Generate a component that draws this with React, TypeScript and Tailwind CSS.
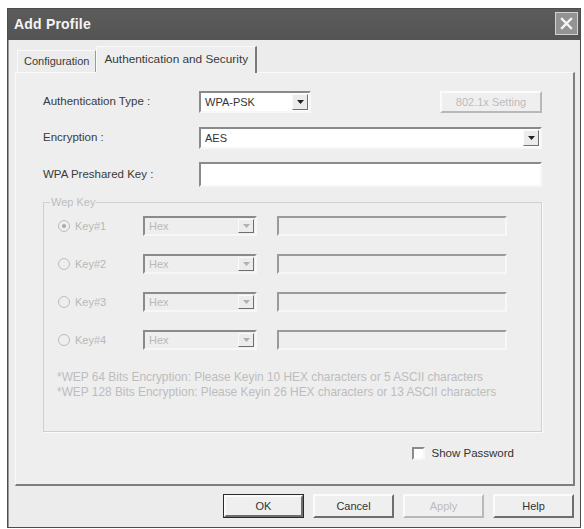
import React from 'react';

const font = { fontFamily: '"Liberation Sans", Arial, sans-serif' };

function Arrow({ disabled }: { disabled?: boolean }) {
  return (
    <span className="flex h-full w-[16px] items-center justify-center border border-t-[#fafafa] border-l-[#fafafa] border-r-[#6f6f6f] border-b-[#6f6f6f] bg-[#ececec]">
      <svg width="7" height="4" viewBox="0 0 7 4">
        <path d="M0 0h7L3.5 4z" fill={disabled ? '#b0b0b0' : '#222'} />
      </svg>
    </span>
  );
}

function Select({ value, width, disabled }: { value: string; width: string; disabled?: boolean }) {
  return (
    <div
      className={`flex h-full items-center border-2 border-t-[#8a8a8a] border-l-[#8a8a8a] border-r-[#f7f7f7] border-b-[#f7f7f7] p-px ${width} ${
        disabled ? 'bg-[#eeeeee] text-[#b8b8b8]' : 'bg-white text-[#333]'
      }`}
    >
      <span className="flex-1 truncate pl-[3px] text-[11px] leading-none">{value}</span>
      <Arrow disabled={disabled} />
    </div>
  );
}

function Button({ label, disabled, primary, width = 'w-[81px]' }: { label: string; disabled?: boolean; primary?: boolean; width?: string }) {
  return (
    <div
      className={`flex h-full items-center justify-center ${width} text-[11px] ${
        primary ? 'border border-[#2a2a2a]' : ''
      } ${disabled ? 'text-[#bcbcbc]' : 'text-[#333]'}`}
    >
      <div
        className={`flex h-full w-full items-center justify-center border-2 border-t-[#fbfbfb] border-l-[#fbfbfb] bg-[#efefef] ${
          disabled ? 'border-r-[#b8b8b8] border-b-[#b8b8b8]' : 'border-r-[#6e6e6e] border-b-[#6e6e6e]'
        }`}
      >
        {label}
      </div>
    </div>
  );
}

function KeyRow({ n, checked }: { n: number; checked?: boolean }) {
  return (
    <div className="flex h-[20px] items-center">
      <div className="flex w-[99px] items-center pl-[14px]">
        <span className="flex h-[12px] w-[12px] items-center justify-center rounded-full border border-[#bdbdbd] bg-[#eeeeee]">
          {checked && <span className="h-[4px] w-[4px] rounded-full bg-[#a8a8a8]" />}
        </span>
        <span className="ml-[5px] text-[11px] text-[#b8b8b8]">Key#{n}</span>
      </div>
      <Select value="Hex" width="w-[114px]" disabled />
      <div className="ml-[20px] h-full w-[230px] border-2 border-t-[#9a9a9a] border-l-[#9a9a9a] border-r-[#f7f7f7] border-b-[#f7f7f7] bg-[#eeeeee]" />
    </div>
  );
}

export default function App() {
  return (
    <div className="h-[529px] w-[584px] overflow-hidden bg-white pl-[7px] pt-[8px]" style={font}>
      <div className="flex h-[520px] w-[574px] flex-col border border-[#4d4d4d] bg-[#ececec] shadow-[inset_1px_0_0_#9a9a9a]">
        {/* title bar */}
        <div className="flex h-[31px] items-center justify-between bg-gradient-to-b from-[#5c5c5c] to-[#545454] pl-[6px] pr-[2px]">
          <span className="text-[14px] font-bold tracking-[0.2px] text-[#f4f4f4]">Add Profile</span>
          <span className="mt-[-2px] flex h-[23px] w-[23px] items-center justify-center border border-[#d2d2d2] bg-[#939393]">
            <svg width="13" height="13" viewBox="0 0 13 13">
              <path d="M2 2l9 9M11 2l-9 9" stroke="#f5f5f5" strokeWidth="2.4" strokeLinecap="square" />
            </svg>
          </span>
        </div>

        <div className="flex flex-1 flex-col pl-[7px] pr-[5px]">
          {/* tabs */}
          <div className="mt-[6px] flex h-[26px] items-end pl-[2px]">
            <div className="flex h-[22px] items-center border-l border-t border-r border-l-[#fafafa] border-t-[#fafafa] border-r-[#9a9a9a] px-[6px] text-[11px] text-[#3a3a3a]">
              Configuration
            </div>
            <div className="relative z-10 -mb-px flex h-[27px] items-center border-l border-t border-r-2 border-l-[#fafafa] border-t-[#fafafa] border-r-[#7a7a7a] bg-[#eeeeee] px-[7px] text-[11.8px] text-[#3a3a3a]">
              Authentication and Security
            </div>
          </div>

          {/* panel */}
          <div className="flex h-[414px] flex-col border-l border-t border-r-2 border-b-2 border-l-[#fafafa] border-t-[#fafafa] border-r-[#7e7e7e] border-b-[#7e7e7e] bg-[#eeeeee] pl-[27px] pr-[31px] pt-[18px]">
            <div className="flex h-[22px] items-center">
              <span className="w-[156px] text-[11.5px] text-[#3a3a3a]">Authentication Type :</span>
              <Select value="WPA-PSK" width="w-[112px]" />
              <div className="flex-1" />
              <Button label="802.1x Setting" disabled width="w-[102px]" />
            </div>

            <div className="mt-[14px] flex h-[22px] items-center">
              <span className="w-[156px] text-[11.5px] text-[#3a3a3a]">Encryption :</span>
              <Select value="AES" width="flex-1" />
            </div>

            <div className="mt-[13px] flex h-[25px] items-center">
              <span className="w-[156px] text-[11.5px] text-[#3a3a3a]">WPA Preshared Key :</span>
              <div className="h-full flex-1 border-2 border-t-[#8a8a8a] border-l-[#8a8a8a] border-r-[#f7f7f7] border-b-[#f7f7f7] bg-white" />
            </div>

            <fieldset className="mt-[9px] h-[236px] border border-[#d0d0d0] shadow-[1px_1px_0_#fbfbfb]">
              <legend className="ml-[6px] px-[1px] text-[11px] leading-[13px] text-[#bdbdbd]">Wep Key</legend>
              <div className="flex flex-col gap-[18px] pt-[7px]">
                <KeyRow n={1} checked />
                <KeyRow n={2} />
                <KeyRow n={3} />
                <KeyRow n={4} />
              </div>
              <div className="mt-[20px] pl-[13px] text-[11.9px] leading-[15px] text-[#bdbdbd]">
                <div>*WEP 64 Bits Encryption: Please Keyin 10 HEX characters or 5 ASCII characters</div>
                <div>*WEP 128 Bits Encryption: Please Keyin 26 HEX characters or 13 ASCII characters</div>
              </div>
            </fieldset>

            <div className="mt-[13px] flex items-center justify-end pr-[28px]">
              <span className="h-[13px] w-[13px] border-2 border-t-[#8a8a8a] border-l-[#8a8a8a] border-r-[#f7f7f7] border-b-[#f7f7f7] bg-white" />
              <span className="ml-[7px] text-[11.5px] text-[#333]">Show Password</span>
            </div>
          </div>

          {/* buttons */}
          <div className="mt-[8px] flex h-[24px] justify-end gap-[9px] pr-px">
            <Button label="OK" primary />
            <Button label="Cancel" />
            <Button label="Apply" disabled />
            <Button label="Help" />
          </div>
        </div>
      </div>
    </div>
  );
}
